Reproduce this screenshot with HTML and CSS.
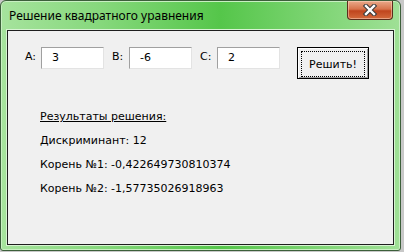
FILE: index.html
```html
<!DOCTYPE html>
<html lang="ru">
<head>
    <meta charset="UTF-8">
    <title>Решение квадратного уравнения</title>
    <link rel="stylesheet" href="styles.css">
</head>
<body>
    <div class="window">
        <!-- Title bar -->
        <div class="titlebar">
            <span class="title">Решение квадратного уравнения</span>
            <div class="close-btn">
                <svg width="18" height="12" viewBox="0 0 18 12">
                    <path d="M5 2 L13 10 M13 2 L5 10" stroke="#3b3b3b" stroke-width="4.5" stroke-linecap="square"/>
                    <path d="M5 2 L13 10 M13 2 L5 10" stroke="#ffffff" stroke-width="2.4" stroke-linecap="square"/>
                </svg>
            </div>
        </div>

        <!-- Client area -->
        <div class="client">
            <div class="coef-row">
                <label class="coef-label">A:</label>
                <div class="field">3</div>
                <label class="coef-label">B:</label>
                <div class="field">-6</div>
                <label class="coef-label">C:</label>
                <div class="field">2</div>
                <button class="solve-btn"><span class="focus-rect">Решить!</span></button>
            </div>

            <div class="results">
                <p class="results-title">Результаты решения:</p>
                <p>Дискриминант: 12</p>
                <p>Корень №1: -0,422649730810374</p>
                <p>Корень №2: -1,57735026918963</p>
            </div>
        </div>
    </div>
</body>
</html>
```

FILE: styles.css
```css
/* General */
body {
    margin: 0;
    background: #c8c8c8;
    font-family: 'DejaVu Sans', sans-serif;
    font-size: 11px;
    color: #000;
}

/* Window frame */
.window {
    width: 399px;
    height: 249px;
    border: 1px solid #3c5f3a;
    border-radius: 6px 6px 3px 3px;
    background: linear-gradient(90deg, #a6e39d 0%, #86d87c 25%, #55c64a 55%, #7fd575 80%, #9fe096 100%);
    display: flex;
    flex-direction: column;
    box-shadow: inset 0 0 0 1px #c8efc2;
}
.titlebar {
    height: 29px;
    display: flex;
    align-items: flex-start;
    padding: 0 7px 0 8px;
}
.title {
    font-family: 'Noto Sans', sans-serif;
    font-size: 12px;
    line-height: 14px;
    padding-top: 8px;
    color: #000;
    flex: 1;
}
.close-btn {
    width: 44px;
    height: 18px;
    border: 1px solid #5b2d1c;
    border-top: none;
    border-radius: 0 0 4px 4px;
    background: linear-gradient(180deg, #e9a98a 0%, #d7744c 45%, #c0451e 55%, #d36a3c 100%);
    display: flex;
    align-items: center;
    justify-content: center;
    box-shadow: inset 0 0 0 1px rgba(255, 220, 200, 0.5);
}

/* Client area */
.client {
    flex: 1;
    margin: 0 6px 5px 6px;
    background: #f0f0f0;
    border: 1px solid #1e1e1e;
    box-shadow: 0 0 0 1px #d8f3d3;
}
.coef-row {
    display: flex;
    align-items: flex-start;
    padding: 16px 0 0 17px;
}
.coef-label {
    padding-top: 3px;
    width: 16px;
}
.field {
    width: 51px;
    height: 20px;
    line-height: 20px;
    padding-left: 10px;
    margin-right: 8px;
    background: #fff;
    border: 1px solid;
    border-color: #a0a0a0 #e3e3e3 #e3e3e3 #a0a0a0;
}
.field + .coef-label {
    width: 17px;
}
.solve-btn {
    margin-left: 9px;
    width: 72px;
    height: 32px;
    padding: 3px;
    background: #f0f0f0;
    border: 1px solid #000;
    box-shadow: inset 1px 1px 0 #fff, inset -1px -1px 0 #a0a0a0;
    font-family: 'DejaVu Sans', sans-serif;
    font-size: 11px;
    color: #000;
}
.focus-rect {
    display: flex;
    height: 100%;
    align-items: center;
    justify-content: center;
    border: 1px dotted #000;
}

/* Results */
.results {
    padding: 26px 0 0 32px;
}
.results p {
    margin: 0;
    line-height: 24px;
}
.results-title {
    text-decoration: underline;
}
```
